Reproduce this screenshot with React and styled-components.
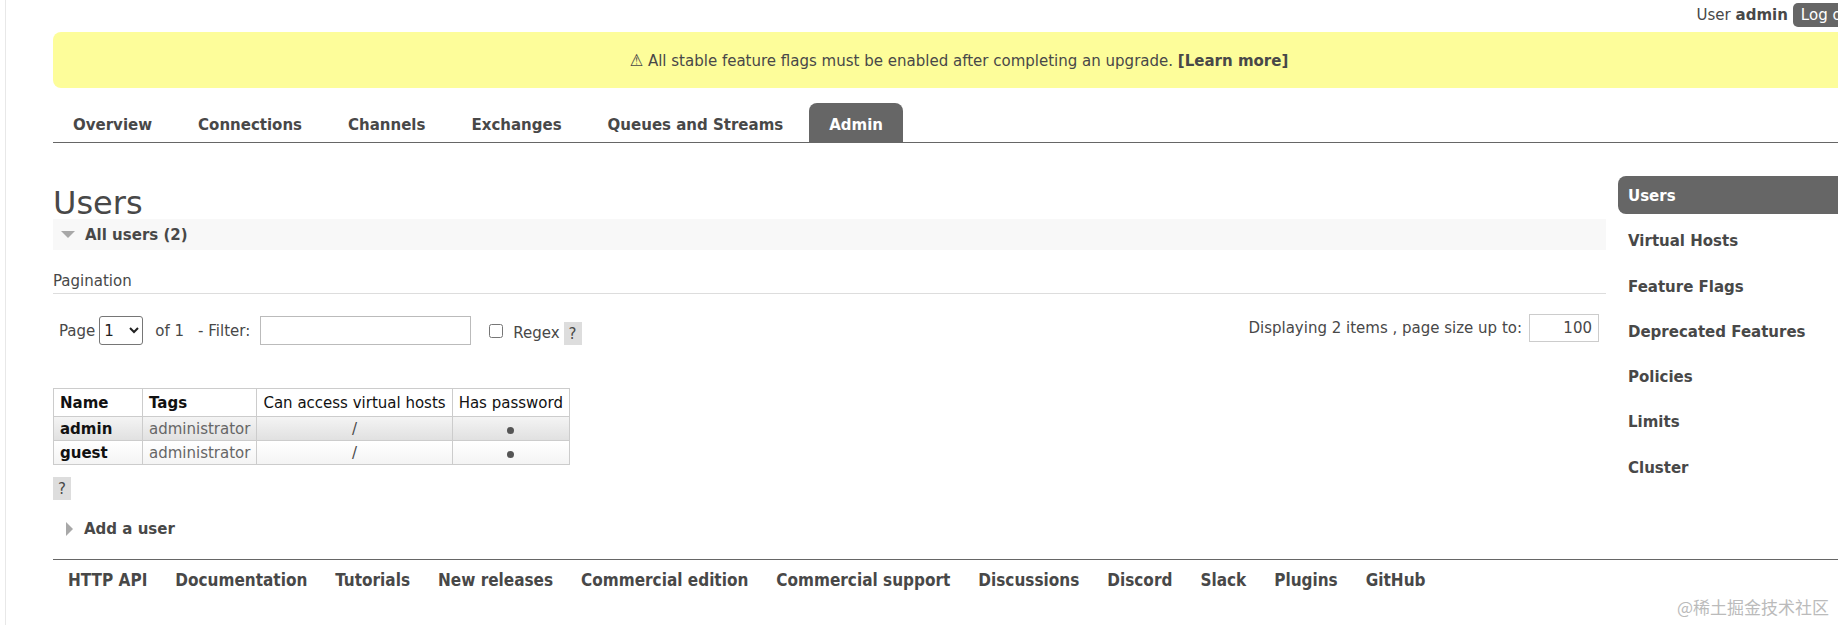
import styled, { createGlobalStyle } from 'styled-components';

const GlobalStyle = createGlobalStyle`
	html, body {
		margin: 0;
		padding: 0;
		background: #ffffff;
		overflow: hidden;
	}
	body {
		font-family: "DejaVu Sans", Verdana, sans-serif;
		font-size: 15px;
		color: #484848;
	}
	* {
		box-sizing: border-box;
	}
`;

const tabs = ['Overview', 'Connections', 'Channels', 'Exchanges', 'Queues and Streams', 'Admin'];
const sideItems = ['Users', 'Virtual Hosts', 'Feature Flags', 'Deprecated Features', 'Policies', 'Limits', 'Cluster'];
const footerLinks = [
	'HTTP API',
	'Documentation',
	'Tutorials',
	'New releases',
	'Commercial edition',
	'Commercial support',
	'Discussions',
	'Discord',
	'Slack',
	'Plugins',
	'GitHub',
];
const users = [
	{ name: 'admin', tags: 'administrator', vhosts: '/', alt: true },
	{ name: 'guest', tags: 'administrator', vhosts: '/', alt: false },
];

function App() {
	return (
		<Page>
			<GlobalStyle />
			<Wrap>
				<TopBar>
					<span>
						User <b>admin</b>
					</span>
					<LogOut>Log out</LogOut>
				</TopBar>
				<Banner>
					<span>
						⚠ All stable feature flags must be enabled after completing an upgrade. <b>[Learn more]</b>
					</span>
				</Banner>
				<Tabs>
					{tabs.map((tab) => (
						<Tab key={tab} active={tab === 'Admin'}>
							{tab}
						</Tab>
					))}
				</Tabs>
				<Main>
					<Content>
						<Title>Users</Title>
						<SectionBar>
							<TriangleDown />
							All users (2)
						</SectionBar>
						<PaginationLabel>Pagination</PaginationLabel>
						<Controls>
							<ControlsLeft>
								<span>Page</span>
								<PageSelect defaultValue="1">
									<option value="1">1</option>
								</PageSelect>
								<span>of 1</span>
								<FilterLabel>- Filter:</FilterLabel>
								<FilterInput type="text" />
								<Check type="checkbox" />
								<RegexLabel>Regex</RegexLabel>
								<Help>?</Help>
							</ControlsLeft>
							<ControlsRight>
								<span>Displaying 2 items , page size up to:</span>
								<SizeInput type="text" defaultValue="100" />
							</ControlsRight>
						</Controls>
						<Table>
							<thead>
								<tr>
									<Th bold width="89px">Name</Th>
									<Th bold>Tags</Th>
									<Th>Can access virtual hosts</Th>
									<Th>Has password</Th>
								</tr>
							</thead>
							<tbody>
								{users.map((user) => (
									<Row key={user.name} alt={user.alt}>
										<NameCell>{user.name}</NameCell>
										<TagCell>{user.tags}</TagCell>
										<CenterCell>{user.vhosts}</CenterCell>
										<CenterCell>
											<Dot />
										</CenterCell>
									</Row>
								))}
							</tbody>
						</Table>
						<HelpBlock>?</HelpBlock>
						<AddUser>
							<TriangleRight />
							Add a user
						</AddUser>
					</Content>
					<Sidebar>
						{sideItems.map((item) => (
							<SideItem key={item} active={item === 'Users'}>
								{item}
							</SideItem>
						))}
					</Sidebar>
				</Main>
				<Footer>
					{footerLinks.map((link) => (
						<FooterLink key={link}>{link}</FooterLink>
					))}
				</Footer>
			</Wrap>
			<Watermark>@稀土掘金技术社区</Watermark>
		</Page>
	);
}

const Page = styled.div`
	position: relative;
	width: 1833px;
	height: 625px;
	margin-left: 5px;
	overflow: hidden;
	border-left: 1px solid #e8e8e8;
`;

const Wrap = styled.div`
	width: 1859px;
	padding-left: 47px;
`;

const TopBar = styled.div`
	display: flex;
	justify-content: flex-end;
	align-items: center;
	gap: 5px;
	height: 32px;
	padding-bottom: 3px;
	font-size: 15px;
	color: #484848;

	b {
		font-weight: bold;
	}
`;

const LogOut = styled.button`
	height: 24px;
	padding: 0 8px;
	border: none;
	border-radius: 5px;
	background: #666666;
	color: #ffffff;
	font-family: "DejaVu Sans", Verdana, sans-serif;
	font-size: 15px;
`;

const Banner = styled.div`
	display: flex;
	align-items: center;
	justify-content: center;
	height: 56px;
	background: #fdfd9a;
	border-radius: 8px;
	font-family: "DejaVu Sans Condensed", "DejaVu Sans", sans-serif;
	font-size: 16.7px;
	color: #484848;

	b {
		font-weight: bold;
	}
`;

const Tabs = styled.div`
	display: flex;
	margin-top: 15px;
	height: 40px;
	border-bottom: 1px solid #666666;
`;

const Tab = styled.div`
	display: flex;
	align-items: center;
	height: 39px;
	padding: 4px 20px 0;
	margin-right: 6px;
	font-weight: bold;
	font-size: 15px;
	color: ${(props) => (props.active ? '#ffffff' : '#484848')};
	background: ${(props) => (props.active ? '#666666' : 'transparent')};
	border-radius: 8px 8px 0 0;
`;

const Main = styled.div`
	display: flex;
	gap: 12px;
`;

const Content = styled.div`
	width: 1553px;
`;

const Title = styled.h1`
	margin: 48px 0 0;
	height: 28px;
	font-size: 32px;
	line-height: 25px;
	font-weight: normal;
	color: #484848;
`;

const SectionBar = styled.div`
	display: flex;
	align-items: center;
	height: 31px;
	padding-left: 8px;
	background: #f8f8f8;
	font-weight: bold;
	color: #484848;
`;

const TriangleDown = styled.span`
	width: 0;
	height: 0;
	margin-right: 10px;
	border-left: 7px solid transparent;
	border-right: 7px solid transparent;
	border-top: 7px solid #a8a8a8;
`;

const TriangleRight = styled.span`
	width: 0;
	height: 0;
	margin-right: 11px;
	border-top: 7px solid transparent;
	border-bottom: 7px solid transparent;
	border-left: 7px solid #a8a8a8;
`;

const PaginationLabel = styled.div`
	margin-top: 21px;
	line-height: 20px;
	padding-bottom: 2px;
	border-bottom: 1px solid #dddddd;
`;

const Controls = styled.div`
	display: flex;
	justify-content: space-between;
	align-items: center;
	margin-top: 22px;
	height: 29px;
	padding-right: 7px;
`;

const ControlsLeft = styled.div`
	display: flex;
	align-items: center;
	padding-left: 6px;

	& > span:first-child {
		margin-right: 4px;
	}
`;

const PageSelect = styled.select`
	width: 44px;
	height: 29px;
	margin-right: 12px;
	font-family: "DejaVu Sans", Verdana, sans-serif;
	font-size: 15px;
	color: #222222;
	border: 1px solid #767676;
	border-radius: 3px;
	background: #ffffff;
`;

const FilterLabel = styled.span`
	margin-left: 14px;
`;

const FilterInput = styled.input`
	width: 211px;
	height: 29px;
	margin-left: 10px;
	border: 1px solid #bbbbbb;
	font-size: 15px;
`;

const Check = styled.input`
	width: 14px;
	height: 14px;
	margin: 0 10px 0 18px;
`;

const RegexLabel = styled.span`
	margin-top: 5px;
	margin-right: 4px;
`;

const Help = styled.span`
	display: inline-flex;
	align-items: center;
	justify-content: center;
	width: 18px;
	height: 23px;
	margin-top: 6px;
	background: #dddddd;
	color: #484848;
	font-size: 15px;
`;

const ControlsRight = styled.div`
	display: flex;
	align-items: center;
	gap: 7px;
	margin-top: -6px;
`;

const SizeInput = styled.input`
	width: 70px;
	height: 28px;
	border: 1px solid #cccccc;
	text-align: right;
	padding-right: 6px;
	font-family: "DejaVu Sans", Verdana, sans-serif;
	font-size: 15px;
	color: #484848;
`;

const Table = styled.table`
	margin-top: 43px;
	border-collapse: collapse;
	font-size: 15px;
`;

const Th = styled.th`
	height: 28px;
	padding: 0 6px;
	text-align: left;
	width: ${(props) => props.width || 'auto'};
	font-weight: ${(props) => (props.bold ? 'bold' : 'normal')};
	color: #111111;
	border: 1px solid #cccccc;
	white-space: nowrap;
`;

const Row = styled.tr`
	background: ${(props) =>
		props.alt ? 'linear-gradient(#f4f4f4, #e0e0e0)' : 'linear-gradient(#ffffff, #f3f3f3)'};

	td {
		height: 24px;
		padding: 0 6px;
		border: 1px solid #cccccc;
		white-space: nowrap;
	}
`;

const NameCell = styled.td`
	font-weight: bold;
	color: #111111;
`;

const TagCell = styled.td`
	color: #666666;
`;

const CenterCell = styled.td`
	text-align: center;
	color: #484848;
`;

const Dot = styled.span`
	display: inline-block;
	width: 7px;
	height: 7px;
	border-radius: 50%;
	background: #555555;
`;

const HelpBlock = styled.div`
	display: flex;
	align-items: center;
	justify-content: center;
	width: 18px;
	height: 23px;
	margin-top: 12px;
	background: #dddddd;
	color: #484848;
	font-size: 15px;
`;

const AddUser = styled.div`
	display: flex;
	align-items: center;
	margin-top: 19px;
	padding-left: 13px;
	line-height: 20px;
	font-weight: bold;
	color: #484848;
`;

const Sidebar = styled.div`
	width: 247px;
	margin-top: 33px;
`;

const SideItem = styled.div`
	display: flex;
	align-items: center;
	height: 38px;
	margin-bottom: 7.3px;
	padding: 2px 0 0 10px;
	font-weight: bold;
	font-size: 15px;
	color: ${(props) => (props.active ? '#ffffff' : '#484848')};
	background: ${(props) => (props.active ? '#666666' : 'transparent')};
	border-radius: 8px 0 0 8px;
`;

const Footer = styled.div`
	display: flex;
	gap: 28px;
	margin-top: 20px;
	padding: 9px 0 0 15px;
	border-top: 1px solid #666666;
`;

const FooterLink = styled.span`
	line-height: 22px;
	font-family: "DejaVu Sans Condensed", "DejaVu Sans", sans-serif;
	font-size: 17px;
	font-weight: bold;
	color: #484848;
`;

const Watermark = styled.div`
	position: absolute;
	right: 9px;
	bottom: 6px;
	font-family: "Noto Sans CJK SC", sans-serif;
	font-size: 17px;
	color: #bbbbbb;
`;

export default App;
